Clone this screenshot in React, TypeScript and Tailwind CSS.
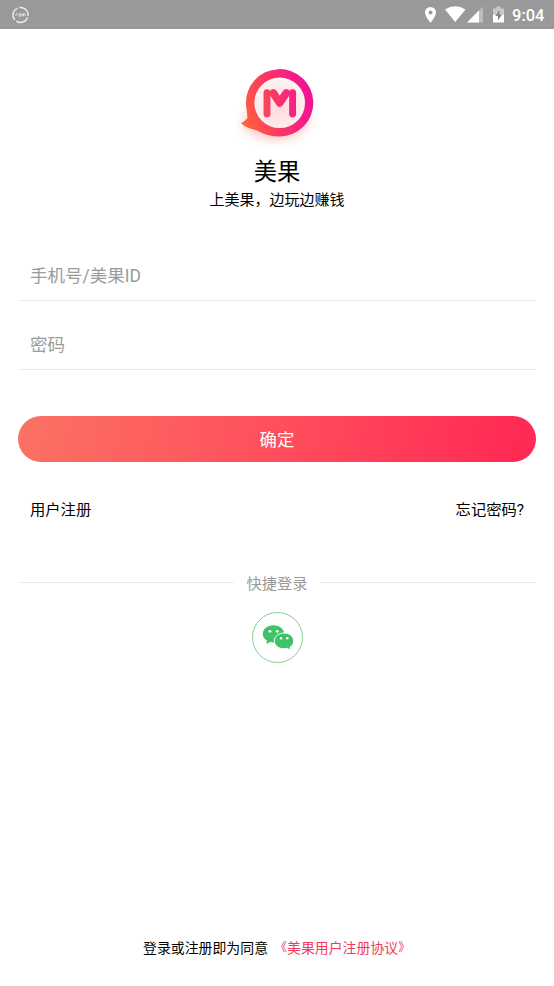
import React from "react";

function StatusBar() {
  return (
    <header className="flex h-[29px] items-center justify-between bg-[#999999] pl-3 pr-[9px] text-white">
      <svg className="h-[18px] w-[18px]" viewBox="0 0 18 18" fill="none">
        <circle cx="8.500" cy="9" r="7.500" stroke="#ececec" strokeWidth="1.500" strokeDasharray="13.700 2" transform="rotate(20 8.500 9)" />
        <path d="M4 10.200V7.800h1.800M7 7.800h2v2.400H7zM10.300 10.200V7.800h1.200v2.400M11.500 7.800h1.500v2.400" stroke="#e4e4e4" strokeWidth=".9" />
      </svg>
      <div className="flex items-center">
        <svg className="h-[29px] w-[84px]" viewBox="424 0 84 29" fill="#fff">
          <path fillRule="evenodd" d="M430.500 7a5.500 5.500 0 0 0-5.500 5.500c0 4 5.500 10.200 5.500 10.200s5.500-6.200 5.500-10.200A5.500 5.500 0 0 0 430.500 7zm0 3.500a2 2 0 1 1 0 4a2 2 0 0 1 0-4z" />
          <path d="M445 9.500Q455 3 465.500 9.500L455.200 22z" />
          <path d="M483 6.500v16h-16z" fill="#bdbdbd" />
          <path d="M479 10.500v12h-12z" />
          <path d="M496.500 6.500h4v2h3.500v6h-11v-6h3.500z" fill="#c9c9c9" />
          <path d="M493 14.500h11v8h-11z" />
          <path d="M499.500 10l-4.300 6h2.700v4.500l4.300-6h-2.700z" fill="#858585" />
        </svg>
        <span className="ml-1 w-[33px] whitespace-nowrap pt-0.5 text-[16.500px] font-medium leading-[28px]" style={{ fontFamily: "Roboto, sans-serif" }}>9:04</span>
      </div>
    </header>
  );
}

function Logo() {
  return (
    <svg className="ml-[1px] h-[100px] w-[105px] shrink-0" viewBox="0 0 105 100" fill="none">
      <defs>
        <linearGradient id="brand" x1="16" y1="60" x2="88" y2="40" gradientUnits="userSpaceOnUse">
          <stop stopColor="#ff6338" />
          <stop offset=".5" stopColor="#fa3269" />
          <stop offset="1" stopColor="#f0109c" />
        </linearGradient>
        <linearGradient id="letter" x1="37" y1="48" x2="72" y2="44" gradientUnits="userSpaceOnUse">
          <stop stopColor="#fb4858" />
          <stop offset="1" stopColor="#f41d88" />
        </linearGradient>
        <radialGradient id="inner" cx=".5" cy=".58" r=".55">
          <stop stopColor="#ffd9dc" />
          <stop offset="1" stopColor="#fff2f2" />
        </radialGradient>
        <filter id="glow" x="-30%" y="-30%" width="160%" height="160%">
          <feGaussianBlur stdDeviation="4" />
        </filter>
      </defs>
      <path d="M21 56L16 71Q27 86 52 86Q77 86 88 62Z" fill="#ff8080" opacity=".35" filter="url(#glow)" />
      <path d="M21 50L22.500 63Q20 66.500 16 68.300Q22 73.500 31.500 75.200Q42 81.500 54.700 81.500A33.700 33.700 0 1 0 21 50z" fill="url(#brand)" />
      <circle cx="54.700" cy="47.800" r="25.300" fill="url(#inner)" />
      <path d="M42 37.600V58.900M67.600 37.600V58.900" stroke="url(#letter)" strokeWidth="6.900" strokeLinecap="round" />
      <path d="M48.300 38L54.700 47.800L61.300 38" stroke="url(#letter)" strokeWidth="7.800" strokeLinecap="round" strokeLinejoin="round" />
    </svg>
  );
}

function WeChatIcon() {
  return (
    <svg className="h-[51px] w-[51px] shrink-0" viewBox="0 0 51 51">
      <path d="M21.500 13.200c-6.100 0-10.700 3.900-10.700 8.700c0 2.800 1.500 5.100 4 6.700l-.3 3.400l3.600-2.100c1.100.3 2.200.5 3.400.5c6 0 10.800-3.800 10.800-8.500s-4.800-8.700-10.800-8.700z" fill="#3fc268" />
      <path d="M32 21c-5.400 0-9.700 3.500-9.700 7.900s4.300 7.900 9.700 7.900c1.200 0 2.300-.2 3.300-.5l3.200 1.900l-.5-2.900c2.300-1.500 3.700-3.800 3.700-6.400c0-4.400-4.300-7.900-9.700-7.900z" fill="#3fc268" stroke="#fff" strokeWidth="1" />
      <g fill="#fff">
        <circle cx="18" cy="19.300" r="1.400" />
        <circle cx="25.200" cy="19.300" r="1.400" />
        <circle cx="29" cy="26.300" r="1.200" />
        <circle cx="35.300" cy="26.300" r="1.200" />
      </g>
    </svg>
  );
}

const inputClass =
  "block w-full border-b border-[#ebebeb] bg-transparent px-3 text-[17.500px] text-black outline-none placeholder:text-[#9b9b9b] placeholder:opacity-100";

export default function App() {
  return (
    <div
      className="flex h-[986px] w-[554px] flex-col bg-white text-black"
      style={{ fontFamily: "Roboto, 'Noto Sans CJK SC', sans-serif" }}
    >
      <StatusBar />
      <main className="flex flex-1 flex-col px-[18px]">
        <div className="mt-[26px] flex flex-col items-center">
          <Logo />
          <h1 className="mt-px text-[23.300px] leading-8">美果</h1>
          <p className="text-[15px] leading-6">上美果，边玩边赚钱</p>
        </div>
        <form className="mt-[38px]" onSubmit={(e) => e.preventDefault()}>
          <input className={`${inputClass} h-[51px] pt-px`} placeholder="手机号/美果ID" />
          <input className={`${inputClass} mt-[19px] h-[50px] pt-px`} type="password" placeholder="密码" />
          <button className="mt-[46px] block h-[46px] w-full rounded-full bg-[linear-gradient(100deg,#fb7264_0%,#ff505c_48%,#ff2b55_95%)] pt-0.5 text-[17.400px] text-white">
            确定
          </button>
        </form>
        <nav className="mt-9 flex justify-between px-3 text-[15.300px] leading-6">
          <a>用户注册</a>
          <a>忘记密码?</a>
        </nav>
        <div className="mt-[50px] flex items-start text-[15.300px] leading-6 text-[#999999]">
          <span className="mt-2.5 h-px flex-1 bg-[#ebebeb]" />
          <span className="px-3">快捷登录</span>
          <span className="mt-2.5 h-px flex-1 bg-[#ebebeb]" />
        </div>
        <button className="ml-[233.500px] mt-[15.500px] flex h-[51px] w-[51px] items-center justify-center rounded-full border border-[#7fd093]">
          <WeChatIcon />
        </button>
        <footer className="mb-[27px] mt-auto flex pl-[125px] text-[13.900px] leading-[22px]">
          <span>登录或注册即为同意</span>
          <a className="ml-[7px] flex text-[#f43a5c]">
            <span className="text-[12px]">《</span>
            <span>美果用户注册协议</span>
            <span className="text-[12px]">》</span>
          </a>
        </footer>
      </main>
    </div>
  );
}
